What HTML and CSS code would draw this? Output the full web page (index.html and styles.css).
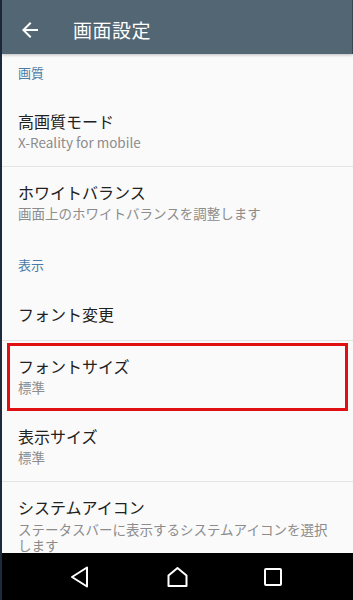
FILE: index.html
```html
<!DOCTYPE html>
<html lang="ja">
<head>
<meta charset="utf-8">
<title>画面設定</title>
<link rel="stylesheet" href="styles.css">
</head>
<body>
<div class="screen">
  <header class="appbar">
    <svg class="back" width="24" height="24" viewBox="0 0 24 24"><path d="M20 11H7.83l5.59-5.59L12 4l-8 8 8 8 1.41-1.41L7.83 13H20v-2z" fill="#fff"/></svg>
    <h1 class="title">画面設定</h1>
  </header>
  <main class="list">
    <div class="cat cat-first">画質</div>
    <div class="item">
      <div class="item-title">高画質モード</div>
      <div class="item-sub">X-Reality for mobile</div>
    </div>
    <div class="divider"></div>
    <div class="item">
      <div class="item-title">ホワイトバランス</div>
      <div class="item-sub">画面上のホワイトバランスを調整します</div>
    </div>
    <div class="cat">表示</div>
    <div class="item item-single">
      <div class="item-title">フォント変更</div>
    </div>
    <div class="divider"></div>
    <div class="item item-marked">
      <div class="item-title">フォントサイズ</div>
      <div class="item-sub">標準</div>
      <span class="highlight"></span>
    </div>
    <div class="item">
      <div class="item-title">表示サイズ</div>
      <div class="item-sub">標準</div>
    </div>
    <div class="divider"></div>
    <div class="item">
      <div class="item-title">システムアイコン</div>
      <div class="item-sub item-sub-wrap">ステータスバーに表示するシステムアイコンを選択します</div>
    </div>
  </main>
  <nav class="navbar">
    <svg width="24" height="24" viewBox="0 0 24 24"><path d="M19 2.5 L4 12 L19 21.5 Z" fill="none" stroke="#fff" stroke-width="2" stroke-linejoin="round"/></svg>
    <svg width="24" height="24" viewBox="0 0 24 24"><path d="M12.5 3 L21.5 10.5 L21.5 21 L3.5 21 L3.5 10.5 Z" fill="none" stroke="#fff" stroke-width="2" stroke-linejoin="round"/></svg>
    <svg width="24" height="24" viewBox="0 0 24 24"><rect x="4" y="4" width="16" height="16" rx="1" fill="none" stroke="#fff" stroke-width="2"/></svg>
  </nav>
</div>
</body>
</html>
```
FILE: styles.css
```css
html, body {
  margin: 0;
  padding: 0;
}
body {
  width: 353px;
  height: 600px;
  overflow: hidden;
  background: #1d2a3c;
  font-family: "Noto Sans CJK JP", "Noto Sans", Roboto, sans-serif;
}
.screen {
  margin-left: 2px;
  width: 351px;
  height: 600px;
  display: flex;
  flex-direction: column;
  background: #fafafa;
}
.appbar {
  height: 54px;
  flex: none;
  box-sizing: border-box;
  padding-top: 6px;
  padding-left: 16px;
  display: flex;
  align-items: center;
  background: #536674;
  border-right: 1px solid #3a4652;
  box-shadow: 0 1px 3px rgba(0,0,0,0.25);
  position: relative;
  z-index: 1;
}
.back {
  flex: none;
}
.title {
  margin: 0 0 0 31px;
  font-size: 19px;
  font-weight: 400;
  color: #fff;
  line-height: 28px;
  letter-spacing: 0.5px;
}
.list {
  flex: 1;
  overflow: hidden;
  display: flex;
  flex-direction: column;
}
.cat {
  flex: none;
  padding: 17.5px 16px 10.5px;
  font-size: 13px;
  line-height: 19px;
  color: #4a7aa6;
}
.cat-first {
  padding: 8.5px 16px 14.5px;
}
.item {
  flex: none;
  padding: 14px 16px 13.5px;
  position: relative;
}
.item-single {
  padding: 18.5px 16px 14.5px;
}
.item-title {
  font-size: 16px;
  line-height: 23px;
  color: #212121;
}
.item-sub {
  font-size: 13.5px;
  line-height: 19.5px;
  color: #8c8c8c;
}
.item-sub-wrap {
  line-height: 16px;
  padding-top: 2px;
}
.divider {
  flex: none;
  height: 1px;
  background: #e4e4e4;
}
.highlight {
  position: absolute;
  left: 5px;
  right: 5px;
  top: 2px;
  bottom: 0;
  border: 3px solid #e00f12;
}
.navbar {
  height: 47px;
  flex: none;
  background: #000;
  display: flex;
  align-items: center;
  padding-left: 66px;
  gap: 72.5px;
}
```
